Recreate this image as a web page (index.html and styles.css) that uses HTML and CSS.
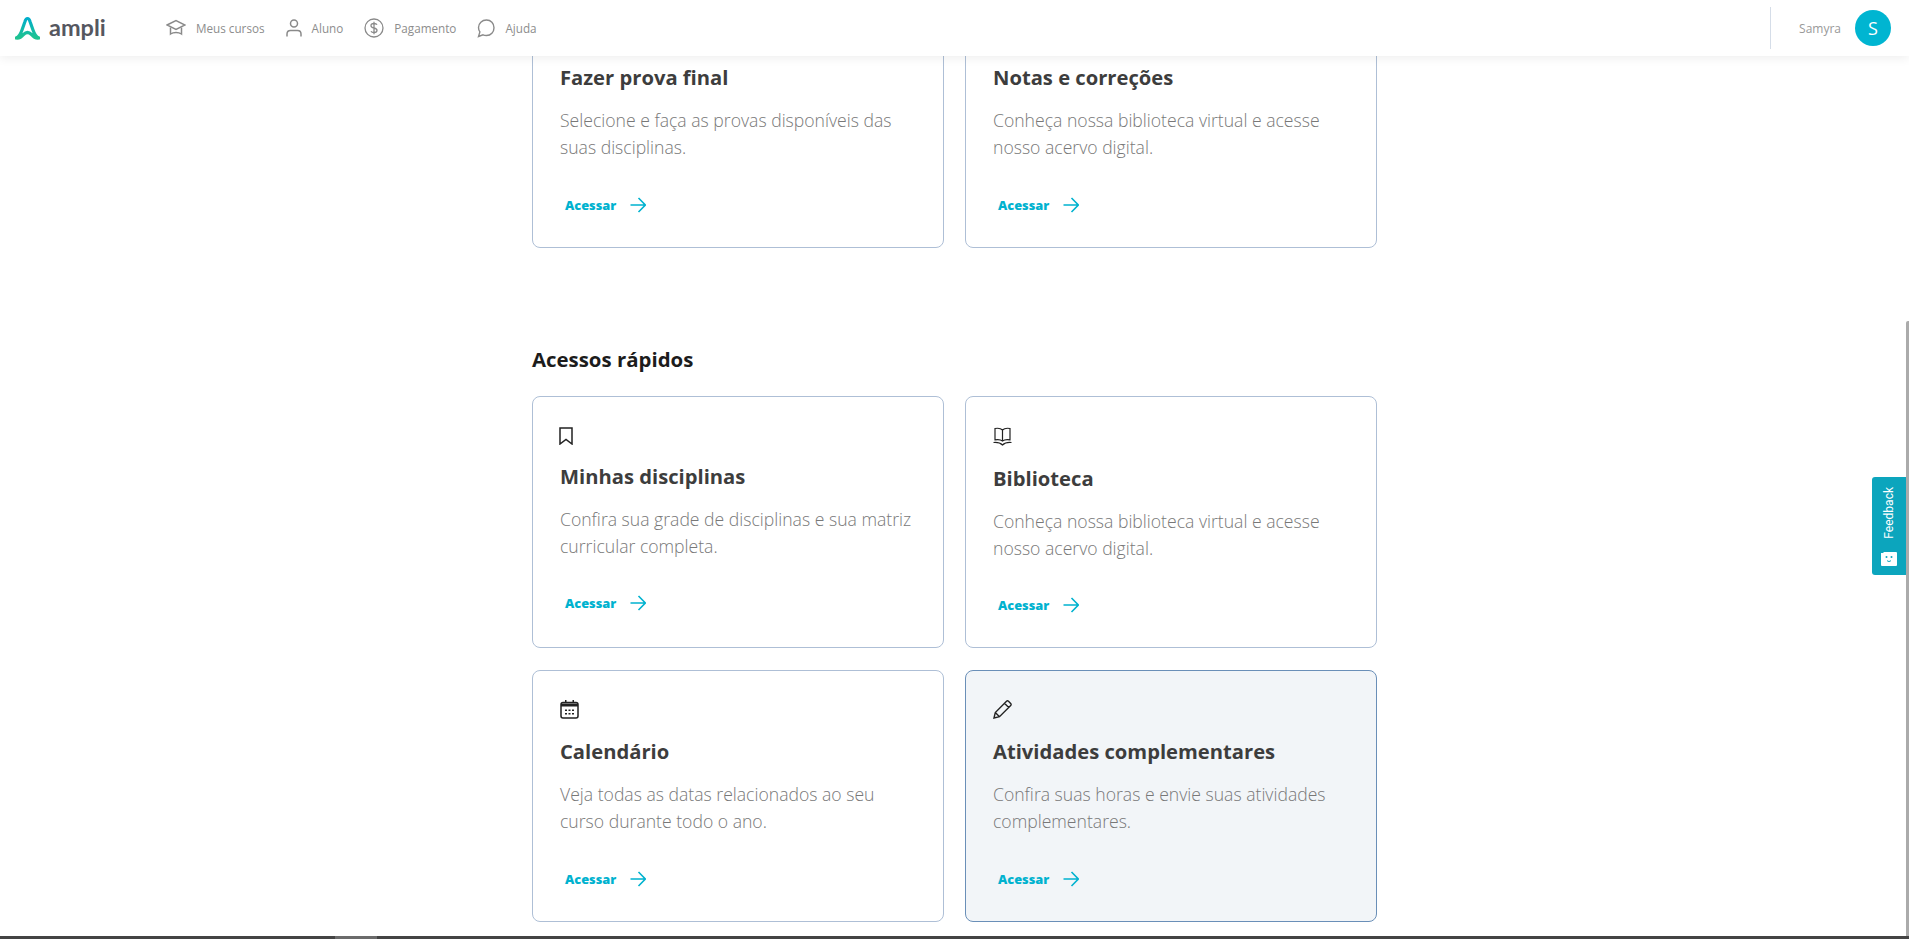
FILE: index.html
```html
<!doctype html>
<html lang="pt-BR">
<head>
    <meta charset="UTF-8">
    <title>Ampli</title>
    <link rel="stylesheet" href="styles.css">
</head>
<body>

<svg class="icon-defs" width="0" height="0">
    <symbol id="arrow" viewBox="0 0 16 16">
        <path d="M.5 8h14.500M8.500 1l6.800 7-6.800 7" fill="none" stroke="currentColor" stroke-width="1.600"/>
    </symbol>
</svg>

<header class="topbar">
    <a class="logo">
        <svg width="25" height="24" viewBox="0 0 25 24">
            <defs>
                <linearGradient id="logo-grad" x1="0" y1="0" x2="0" y2="1">
                    <stop offset="0" stop-color="#00aecb"/>
                    <stop offset="1" stop-color="#1fc38f"/>
                </linearGradient>
            </defs>
            <path d="M1 22C4.500 21 6 17 7 14L10 5.500C11.200 1.500 13.800 1.500 15 5.500L18 14C19 17 20.500 21 24 22 21 22.500 18.500 21 16.500 18.500 14 16 11 16 8.500 18.500 6.500 21 4 22.500 1 22Z" fill="none" stroke="url(#logo-grad)" stroke-width="3.200" stroke-linejoin="round"/>
        </svg>
        <span class="logo-text">ampli</span>
    </a>
    <nav class="nav">
        <a class="nav-item">
            <svg width="20" height="18" viewBox="0 0 20 18" fill="none" stroke="#8a8a8a" stroke-width="1.500"><path d="M1 6 10 1.500 19 6l-9 4.500Z"/><path d="M4.500 8.500V15c3-2 8-2 11 0V8.500"/></svg>
            Meus cursos
        </a>
        <a class="nav-item">
            <svg width="16" height="18" viewBox="0 0 16 18" fill="none" stroke="#8a8a8a" stroke-width="1.500"><circle cx="8" cy="4.500" r="3.500"/><path d="M1 17.500V15c0-2 1.500-3.500 3.500-3.500h7c2 0 3.500 1.500 3.500 3.500v2.500"/></svg>
            Aluno
        </a>
        <a class="nav-item">
            <svg width="20" height="20" viewBox="0 0 20 20" fill="none" stroke="#8a8a8a" stroke-width="1.300"><circle cx="10" cy="10" r="9"/><path d="M13 6.800c-.5-1-1.500-1.300-3-1.300-1.800 0-3 .8-3 2.200 0 3 6 1.600 6 4.600 0 1.400-1.200 2.200-3 2.200-1.500 0-2.500-.4-3-1.300M10 3.800v12.400"/></svg>
            Pagamento
        </a>
        <a class="nav-item">
            <svg width="18" height="19" viewBox="0 0 18 19" fill="none" stroke="#8a8a8a" stroke-width="1.400"><path d="M9.500 1C5 1 1.500 4.200 1.500 8.500c0 1.700.5 3.200 1.400 4.400L1.500 17.500l4.500-1.700c1.100.5 2.200.7 3.500.7 4.400 0 7.500-3.500 7.500-7.800S13.900 1 9.500 1Z"/></svg>
            Ajuda
        </a>
    </nav>
    <div class="user">
        <span class="user-name">Samyra</span>
        <span class="avatar">S</span>
    </div>
</header>

<main class="content">
    <section class="grid first-grid">
        <article class="card">
            <div class="card-icon"></div>
            <h3>Fazer prova final</h3>
            <p>Selecione e faça as provas disponíveis das suas disciplinas.</p>
            <a class="go">Acessar <svg width="16" height="16"><use href="#arrow"/></svg></a>
        </article>
        <article class="card">
            <div class="card-icon"></div>
            <h3>Notas e correções</h3>
            <p>Conheça nossa biblioteca virtual e acesse nosso acervo digital.</p>
            <a class="go">Acessar <svg width="16" height="16"><use href="#arrow"/></svg></a>
        </article>
    </section>

    <h2 class="section-title">Acessos rápidos</h2>

    <section class="grid">
        <article class="card card-short">
            <div class="card-icon">
                <svg class="bookmark" width="14" height="18" viewBox="0 0 14 18" fill="none" stroke="#222" stroke-width="1.500"><path d="M1 1h12v16l-6-4.500L1 17Z"/></svg>
            </div>
            <h3>Minhas disciplinas</h3>
            <p>Confira sua grade de disciplinas e sua matriz curricular completa.</p>
            <a class="go">Acessar <svg width="16" height="16"><use href="#arrow"/></svg></a>
        </article>
        <article class="card card-book">
            <div class="card-icon">
                <svg width="19" height="19" viewBox="0 0 19 19" fill="none" stroke="#222" stroke-width="1.200"><path d="M9.500 3C8 1.500 5 1 2 1.500v11.300c3-.5 6 0 7.500 1.200 1.500-1.200 4.500-1.700 7.500-1.200V1.500C14 1 11 1.500 9.500 3Zm0 0v11"/><path d="M.5 15.500c3-.3 6.500 0 9 2.500 2.500-2.500 6-2.800 9-2.500"/></svg>
            </div>
            <h3>Biblioteca</h3>
            <p>Conheça nossa biblioteca virtual e acesse nosso acervo digital.</p>
            <a class="go">Acessar <svg width="16" height="16"><use href="#arrow"/></svg></a>
        </article>
        <article class="card">
            <div class="card-icon">
                <svg width="19" height="19" viewBox="0 0 19 19"><rect x="1" y="2.500" width="17" height="15.500" rx="2" fill="none" stroke="#222" stroke-width="1.500"/><path d="M1 3.500h17v3H1ZM5 0h1.500v3H5ZM12.500 0H14v3h-1.500Z" fill="#222"/><path d="M5 9.500h2v1.500H5Zm3.500 0h2v1.500h-2Zm3.500 0h2v1.500h-2ZM5 13h2v1.500H5Zm3.500 0h2v1.500h-2Zm3.500 0h2v1.500h-2Z" fill="#222"/></svg>
            </div>
            <h3>Calendário</h3>
            <p>Veja todas as datas relacionados ao seu curso durante todo o ano.</p>
            <a class="go">Acessar <svg width="16" height="16"><use href="#arrow"/></svg></a>
        </article>
        <article class="card card-active">
            <div class="card-icon">
                <svg width="19" height="19" viewBox="0 0 19 19" fill="none" stroke="#222" stroke-width="1.400"><path d="M1 18l1.300-5.500L13.500 1.300c.6-.6 1.400-.6 2 0l2.200 2.200c.6.600.6 1.400 0 2L6.500 16.700ZM2.300 12.500l4.200 4.200M11.500 3.300l4.200 4.200"/></svg>
            </div>
            <h3>Atividades complementares</h3>
            <p>Confira suas horas e envie suas atividades complementares.</p>
            <a class="go">Acessar <svg width="16" height="16"><use href="#arrow"/></svg></a>
        </article>
    </section>
</main>

<div class="win-bar"><span class="win-bar-thumb"></span></div>
<div class="scroll-thumb"></div>

<a class="feedback">
    <span class="feedback-label">Feedback</span>
    <svg width="16" height="14" viewBox="0 0 16 14"><path d="M0 1h2L3 0h12a1 1 0 0 1 1 1v12a1 1 0 0 1-1 1H1a1 1 0 0 1-1-1Z" fill="#fff"/><circle cx="5.500" cy="5" r="1" fill="#0ca5bd"/><circle cx="10.500" cy="5" r="1" fill="#0ca5bd"/><path d="M6 8.500c1 1.300 3 1.300 4 0" fill="none" stroke="#0ca5bd"/></svg>
</a>

</body>
</html>
```

FILE: styles.css
```css
* {
    box-sizing: border-box;
}
html, body {
    height: 100%;
}
body {
    margin: 0;
    height: 939px;
    overflow: hidden;
    display: flex;
    flex-direction: column;
    background: #fff;
    font-family: "Open Sans", "Noto Sans", sans-serif;
    color: #3d3d3d;
}
.icon-defs {
    position: absolute;
}

/* topo */
.topbar {
    position: absolute;
    top: 0;
    left: 0;
    right: 0;
    height: 56px;
    z-index: 5;
    display: flex;
    align-items: center;
    padding-left: 15px;
    background: #fff;
    box-shadow: 0 2px 10px rgba(0,0,0,0.07);
}
.logo {
    display: flex;
    align-items: center;
    gap: 9px;
    width: 151px;
}
.logo-text {
    font-family: Lato, sans-serif;
    font-size: 23.500px;
    font-weight: 700;
    color: #55575f;
    line-height: 1;
}
.nav {
    display: flex;
    gap: 21px;
}
.nav-item {
    display: flex;
    align-items: center;
    gap: 10px;
    font-size: 11.700px;
    color: #8d8d8d;
}
.user {
    margin-left: auto;
    align-self: center;
    height: 42px;
    display: flex;
    align-items: center;
    gap: 14px;
    padding: 0 18px 0 28px;
    border-left: 1px solid #d5dde8;
}
.user-name {
    font-size: 12px;
    color: #999;
}
.avatar {
    width: 36px;
    height: 36px;
    border-radius: 50%;
    display: flex;
    align-items: center;
    justify-content: center;
    background: #00b5d1;
    color: #fff;
    font-size: 18px;
}

/* conteudo */
.content {
    flex: 1;
    width: 845px;
    margin: -4px auto 0;
}
.grid {
    display: grid;
    grid-template-columns: 412px 412px;
    gap: 22px 21px;
}
.first-grid {
    margin-bottom: 97px;
}
.section-title {
    margin: 0 0 22px;
    font-size: 20.400px;
    line-height: 29px;
    font-weight: 700;
    color: #1c1c1c;
}
.card {
    height: 252px;
    padding: 29px 27px 0 27px;
    border: 1px solid #aebfd6;
    border-radius: 8px;
    background: #fff;
}
.card-active {
    background: #f2f5f8;
    border-color: #6a8fb8;
}
.card-icon {
    height: 19px;
}
.card-icon svg {
    display: block;
}
.card-short .card-icon,
.card-book .card-icon {
    padding-top: 1px;
}
.bookmark {
    margin-left: -1px;
}
.card h3 {
    margin: 18px 0 15px;
    font-size: 20.200px;
    line-height: 29px;
    font-weight: 700;
    color: #3d3d3d;
}
.card-short h3 {
    margin-top: 17px;
}
.card-book h3 {
    margin-top: 19px;
}
.card p {
    margin: 0;
    height: 54px;
    font-size: 17.600px;
    font-weight: 300;
    line-height: 27px;
    color: #787878;
}
.go {
    display: inline-flex;
    align-items: center;
    gap: 14px;
    margin: 35px 0 0 5px;
    font-size: 12.800px;
    font-weight: 800;
    color: #00b2cf;
}
.card-short .go,
.card-book .go {
    margin-top: 34px;
}

/* barras da janela */
.win-bar {
    height: 3px;
    flex: none;
    background: #444;
    padding-left: 335px;
}
.win-bar-thumb {
    display: block;
    width: 42px;
    height: 3px;
    background: #6b6b6b;
}
.scroll-thumb {
    position: absolute;
    top: 321px;
    right: 0;
    bottom: 3px;
    width: 3px;
    background: #ababab;
    border-radius: 2px 0 0 0;
}
.feedback {
    position: absolute;
    top: 477px;
    right: 3px;
    width: 34px;
    height: 98px;
    padding: 10px 0 9px;
    display: flex;
    flex-direction: column;
    align-items: center;
    justify-content: space-between;
    background: #0ca5bd;
    border-radius: 3px 0 0 3px;
    color: #fff;
}
.feedback-label {
    writing-mode: vertical-rl;
    transform: rotate(180deg);
    font-family: Roboto, sans-serif;
    font-size: 12px;
    line-height: 1;
}
```
